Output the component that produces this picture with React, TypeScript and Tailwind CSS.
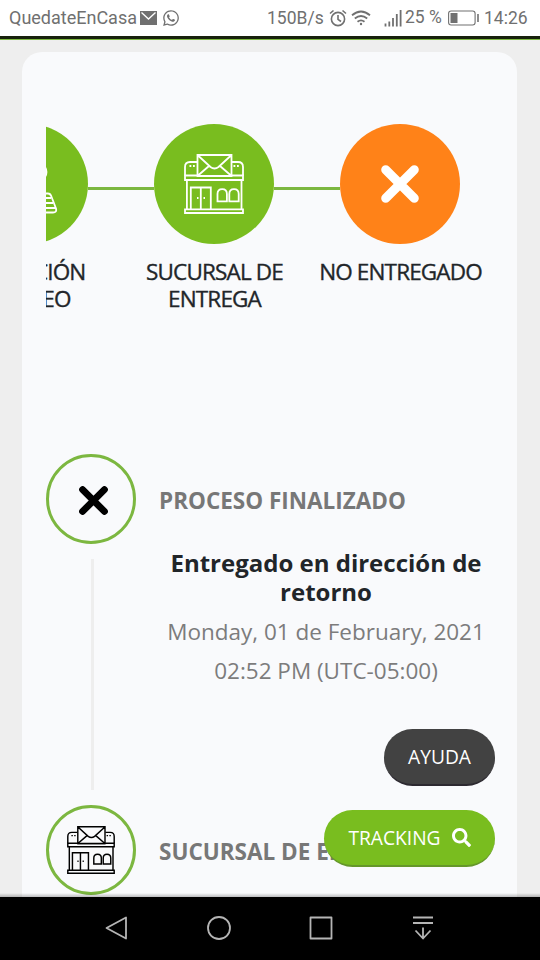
import * as React from 'react';
import { FaSearch, FaWhatsapp } from 'react-icons/fa';

interface IconProps {
  className?: string;
}

interface Step {
  id: string;
  label: string[];
  color: string;
  icon: React.ReactNode;
}

/** Post office building with an envelope on the roof */
const StoreIcon = ({ className }: IconProps) => (
  <svg className={className} viewBox="0 0 60 60" fill="none" stroke="currentColor" strokeWidth="1.8">
    <path d="M13.5 1h34v21h-34zM14 1.5l12.5 11.5q4 3 8 0L47 1.5M14 21.5l11-9.5M47 21.5l-11-9.5" />
    <path d="M13 8H6Q1 8 1 13v8.5M48 8h6q5 0 5 5v8.5" />
    <path d="M13 21.5H1v4.5h58v-4.5H48M13 21.8h35" />
    <path d="M2.9 26v29M57.5 26v29M1 55.3h58v3.7H1z" />
    <path d="M6.8 55V33.5h20V55M16.8 33.5V55" />
    <path d="M33.5 47.4V40q0-4.8 4.7-4.8t4.7 4.8v7.4zM45.3 47.4V40q0-4.8 4.7-4.8t4.7 4.8v7.4z" />
    <path d="M5.5 12h1.8M9 12h1.8M49.5 12h1.8M53 12h1.8M13 44h1.5M19.5 44H21" />
  </svg>
);

/** Thick cross with rounded ends */
const CrossIcon = ({ className }: IconProps) => (
  <svg className={className} viewBox="0 0 38 38" fill="none" stroke="currentColor" strokeWidth="9" strokeLinecap="round">
    <path d="M4.7 4.7l28.6 28.6M33.3 4.7L4.7 33.3" />
  </svg>
);

const SortingIcon = ({ className }: IconProps) => (
  <svg className={className} viewBox="0 0 60 60" fill="none" stroke="currentColor" strokeWidth="1.8">
    <ellipse cx="41.5" cy="18" rx="7" ry="8" />
    <path d="M36 39.5h14q2 0 3 2l5 13q1 4-3 4H36M36 44h17M36 49h19M36 54h21.5" />
  </svg>
);

const steps: Step[] = [
  { id: 'reception', label: ['RECEPCIÓN', 'CORREO'], color: 'bg-[#79bd1f]', icon: <SortingIcon className="size-[60px]" /> },
  { id: 'branch', label: ['SUCURSAL DE', 'ENTREGA'], color: 'bg-[#79bd1f]', icon: <StoreIcon className="size-[60px]" /> },
  { id: 'failed', label: ['NO ENTREGADO'], color: 'bg-[#ff8218]', icon: <CrossIcon className="size-[38px]" /> },
];

const StatusBar = () => (
  <header className="flex h-9 shrink-0 items-center bg-white pr-2 pl-[9px] font-[Roboto,sans-serif] text-[17.5px] text-[#707070]">
    <span className="mb-[2px] w-[131px] text-[18px] whitespace-nowrap">QuedateEnCasa</span>
    <svg className="h-[14px] w-[17px]" viewBox="0 0 17 14">
      <path fill="currentColor" d="M0 0h17v14H0z" />
      <path d="M1.5 1.5l7 6.5 7-6.5" fill="none" stroke="white" strokeWidth="1.3" />
    </svg>
    <FaWhatsapp className="ml-[5px] size-[18px]" />
    <div className="ml-auto flex items-center">
      <span className="w-[62px] whitespace-nowrap">150B/s</span>
      <svg className="size-[18px]" viewBox="0 0 18 18" fill="none" stroke="currentColor" strokeWidth="1.6">
        <circle cx="9" cy="10" r="6.6" />
        <path d="M9 6v4.3l3 2.2M1 4.5L4.5 1.5M17 4.5L13.5 1.5" />
      </svg>
      <svg className="ml-1 h-4 w-5" viewBox="0 0 20 16" fill="none" stroke="currentColor" strokeWidth="1.8">
        <path d="M1 5.2q9-7.5 18 0M3.8 8.5q6.2-5 12.4 0M6.5 11.7q3.5-2.7 7 0" />
        <circle cx="10" cy="14" r="1.2" fill="currentColor" stroke="none" />
      </svg>
      <svg className="ml-[13px] h-[18px] w-[18px]" viewBox="0 0 18 18" stroke="currentColor" strokeWidth="1.8">
        <path d="M1.5 17.5v-3M5.3 17.5v-5M9 17.5V9M12.8 17.5V5M16.6 17.5V1" />
      </svg>
      <span className="mb-[2px] ml-[3px] w-[43px] whitespace-nowrap">25 %</span>
      <svg className="h-4 w-[31px]" viewBox="0 0 31 16" fill="none" stroke="currentColor">
        <rect x=".6" y="1" width="26.5" height="14" rx="2.5" strokeWidth="1.1" />
        <path d="M2.5 3h7v10h-7z" fill="currentColor" stroke="none" />
        <path d="M30 4v8" strokeWidth="1.6" />
      </svg>
      <span className="mr-[3px] ml-[5px] w-[45px] whitespace-nowrap">14:26</span>
    </div>
  </header>
);

const ProgressSteps = () => (
  <div className="flex h-[402px] justify-end overflow-hidden pt-[72px]">
    <div className="flex w-[558px] shrink-0">
      {steps.map((step, index) => (
        <div key={step.id} className="w-[186px] shrink-0">
          <div className="flex items-center">
            <div className={index === 0 ? 'mt-2 h-[3px] flex-1' : 'mt-2 h-[3px] flex-1 bg-[#7cb740]'} />
            <div className={`flex size-[120px] items-center justify-center rounded-full text-white ${step.color}`}>
              {step.icon}
            </div>
            <div className={index === steps.length - 1 ? 'mt-2 h-[3px] flex-1' : 'mt-2 h-[3px] flex-1 bg-[#7cb740]'} />
          </div>
          <div className="mt-[14px] pl-px text-center text-[22.5px] leading-[27px] font-medium tracking-[-0.85px] text-[#212529] [-webkit-text-stroke:0.35px]">
            {step.label.map((line) => (
              <div key={line} className="whitespace-nowrap">{line}</div>
            ))}
          </div>
        </div>
      ))}
    </div>
  </div>
);

const TimelineHeading = ({ icon, title }: { icon: React.ReactNode; title: string }) => (
  <div className="flex items-center">
    <div className="flex size-[90px] shrink-0 items-center justify-center rounded-full border-[3px] border-[#7cb740] text-black">
      {icon}
    </div>
    <h2 className="mt-[3px] ml-[23px] text-[22.5px] font-bold whitespace-nowrap text-[#777777]">{title}</h2>
  </div>
);

const NavigationBar = () => (
  <nav className="flex h-[63px] shrink-0 items-center justify-center gap-[78px] bg-black text-[#b5b5b5]">
    {['M21 1.5v21L1.5 12z', 'M12 1a11 11 0 1 0 0 22 11 11 0 1 0 0-22z', 'M1.5 1.5h21v21h-21z', 'M2 1.5h20M2 7h20M12 11.5v10.5M4.5 14.5l7.5 8 7.5-8'].map((d) => (
      <svg key={d} className="-mt-px size-6" viewBox="0 0 24 24" fill="none" stroke="currentColor" strokeWidth="1.8" strokeLinejoin="round">
        <path d={d} />
      </svg>
    ))}
  </nav>
);

export default function App() {
  return (
    <div className="flex h-[960px] w-[540px] flex-col overflow-hidden bg-[#eeeeee] font-['Open_Sans',sans-serif]">
      <StatusBar />
      <div className="h-1 shrink-0 border-b border-[#7cb740] bg-[#17210c]" />
      <main className="relative min-h-0 flex-1 overflow-hidden pt-3 pr-[23px] pl-[22px]">
        <section className="h-[900px] rounded-[20px] bg-[#f9fafc] px-6">
          <ProgressSteps />
          <TimelineHeading title="PROCESO FINALIZADO" icon={<CrossIcon className="mt-[3px] ml-1 size-[29px]" />} />
          <div className="flex h-[261px]">
            <div className="mt-[15px] ml-[45px] h-[231px] w-[3px] shrink-0 bg-[#eeeeee]" />
            <div className="ml-[65px] flex-1 pt-1 text-center text-[22.5px] text-[#7c7c7c]">
              <h3 className="text-[24px] leading-[29px] font-bold text-[#212529]">Entregado en dirección de retorno</h3>
              <p className="mt-[6px] leading-[39px] whitespace-nowrap">Monday, 01 de February, 2021</p>
              <p className="leading-[39px] whitespace-nowrap">02:52 PM (UTC-05:00)</p>
            </div>
          </div>
          <TimelineHeading title="SUCURSAL DE ENTREGA" icon={<StoreIcon className="size-12" />} />
        </section>

        {/* Floating actions */}
        <div className="absolute top-[689px] right-[45px] flex flex-col items-end gap-6 text-[19.2px] text-white">
          <button className="h-[57px] w-[111px] rounded-full border-b-2 border-[#2c2930] bg-[#424242] pt-[2px]">AYUDA</button>
          <button className="flex h-[57px] w-[171px] items-center justify-center gap-[11px] rounded-full border-b-2 border-[#65972a] bg-[#79bd1f]">
            <span className="mt-[2px]">TRACKING</span>
            <FaSearch className="size-[19px]" />
          </button>
        </div>
        <div className="absolute inset-x-0 bottom-0 h-1 bg-linear-to-b from-transparent to-black/25" />
      </main>
      <NavigationBar />
    </div>
  );
}
